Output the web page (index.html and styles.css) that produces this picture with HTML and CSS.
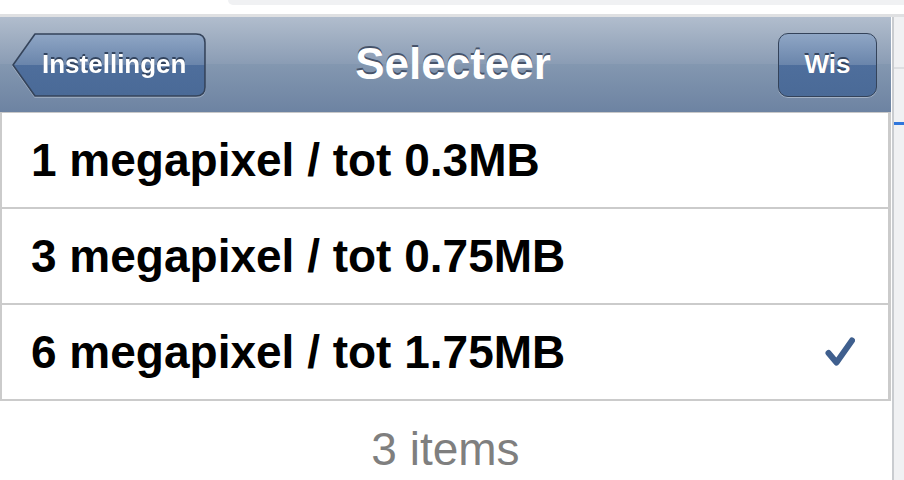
FILE: index.html
```html
<!DOCTYPE html>
<html>
<head>
<meta charset="utf-8">
<link rel="stylesheet" href="styles.css">
</head>
<body>
<div class="chrome">
  <div class="chrome-blank"></div>
  <div class="chrome-tab"></div>
</div>
<div class="chrome-gap"></div>
<div class="main">
  <div class="page">
    <div class="nav">
      <div class="nav-left">
        <button class="back">
          <svg class="back-bg" viewBox="0 0 194 66" preserveAspectRatio="none">
            <defs>
              <linearGradient id="bg" x1="0" y1="0" x2="0" y2="1">
                <stop offset="0" stop-color="#8fa6c5"/>
                <stop offset="0.5" stop-color="#6a85ab"/>
                <stop offset="0.5" stop-color="#4e6e9c"/>
                <stop offset="1" stop-color="#4a6a97"/>
              </linearGradient>
            </defs>
            <path d="M23 1 H184 Q193 1 193 10 V56 Q193 65 184 65 H23 L1 33 Z" fill="url(#bg)" stroke="#34435a" stroke-width="1.6" stroke-linejoin="round"/>
          </svg>
          <span>Instellingen</span>
        </button>
      </div>
      <div class="title">Selecteer</div>
      <div class="nav-right">
        <button class="btn">Wis</button>
      </div>
    </div>
    <ul class="list">
      <li class="row"><span>1 megapixel / tot 0.3MB</span></li>
      <li class="row"><span>3 megapixel / tot 0.75MB</span></li>
      <li class="row"><span>6 megapixel / tot 1.75MB</span>
        <svg class="check" viewBox="0 0 30 30"><path d="M3.5 16 L11.5 25.5 L27 3.5" fill="none" stroke="#3f5f8e" stroke-width="6" stroke-linecap="round" stroke-linejoin="round"/></svg>
      </li>
    </ul>
    <div class="count">3 items</div>
  </div>
  <div class="side">
    <div class="side-top"></div>
    <div class="side-mid"></div>
    <div class="side-blue"></div>
  </div>
</div>
</body>
</html>
```
FILE: styles.css
```css
html, body {
  margin: 0;
  padding: 0;
  background: #fff;
  font-family: "Liberation Sans", Arial, sans-serif;
  width: 904px;
  height: 480px;
  overflow: hidden;
}
.chrome {
  display: flex;
  height: 5px;
}
.chrome-blank {
  width: 228px;
}
.chrome-tab {
  flex: 1;
  background: #f0f1f3;
  border-bottom-left-radius: 10px;
}
.chrome-gap {
  height: 9px;
  border-bottom: 3px solid #dfe0e2;
}
.main {
  display: flex;
  height: 463px;
}
.page {
  width: 891px;
  margin-right: 1px;
  display: flex;
  flex-direction: column;
}
.side {
  flex: 1;
  background: #f0f1f3;
  border-left: 2px solid #c9ccd0;
  display: flex;
  flex-direction: column;
}
.side-top {
  height: 50px;
  border-bottom: 2px solid #dddfe2;
}
.side-mid {
  height: 53px;
}
.side-blue {
  height: 3px;
  background: #2f76dc;
}
.nav {
  height: 96px;
  box-sizing: border-box;
  border-bottom: 1px solid #c8c8c8;
  background: linear-gradient(#b1bdcd 0%, #8a9cb4 50%, #8397b0 50%, #6d83a2 100%);
  display: grid;
  grid-template-columns: 1fr auto 1fr;
  align-items: center;
  padding: 0 14px 0 12px;
}
.nav-left {
  display: flex;
  justify-content: flex-start;
}
.nav-right {
  display: flex;
  justify-content: flex-end;
}
.title {
  color: #fff;
  font-weight: bold;
  font-size: 44px;
  text-shadow: 0 -2px 0 #46536a;
  padding-left: 17px;
  margin-top: -2px;
}
.back, .btn {
  font-family: "Liberation Sans", Arial, sans-serif;
  font-weight: bold;
  font-size: 26px;
  color: #fff;
  text-shadow: 0 -2px 0 #33445e;
  height: 64px;
  cursor: pointer;
}
.back {
  position: relative;
  width: 194px;
  border: 0;
  background: transparent;
  padding: 0 0 0 30px;
  text-align: left;
  filter: drop-shadow(0 1px 0 rgba(255,255,255,0.35));
}
.back-bg {
  position: absolute;
  left: 0;
  top: 0;
  width: 100%;
  height: 100%;
}
.back span {
  position: relative;
}
.btn {
  width: 99px;
  border: 1.5px solid #34435a;
  border-radius: 10px;
  background: linear-gradient(#8fa6c5 0%, #6a85ab 50%, #4e6e9c 50%, #4a6a97 100%);
  box-shadow: 0 1px 0 rgba(255,255,255,0.35);
  padding: 0;
}
.list {
  list-style: none;
  margin: 0;
  padding: 0;
  border-left: 2px solid #cbcbcb;
  border-right: 3px solid #cbcbcb;
}
.row {
  height: 94px;
  border-bottom: 2px solid #cbcbcb;
  display: flex;
  align-items: center;
  justify-content: space-between;
  padding: 0 33px 0 29px;
  font-weight: bold;
  font-size: 46px;
  color: #000;
}
.check {
  width: 30px;
  height: 30px;
}
.count {
  text-align: center;
  color: #7f7f7f;
  font-size: 46px;
  padding-top: 21px;
}
```
